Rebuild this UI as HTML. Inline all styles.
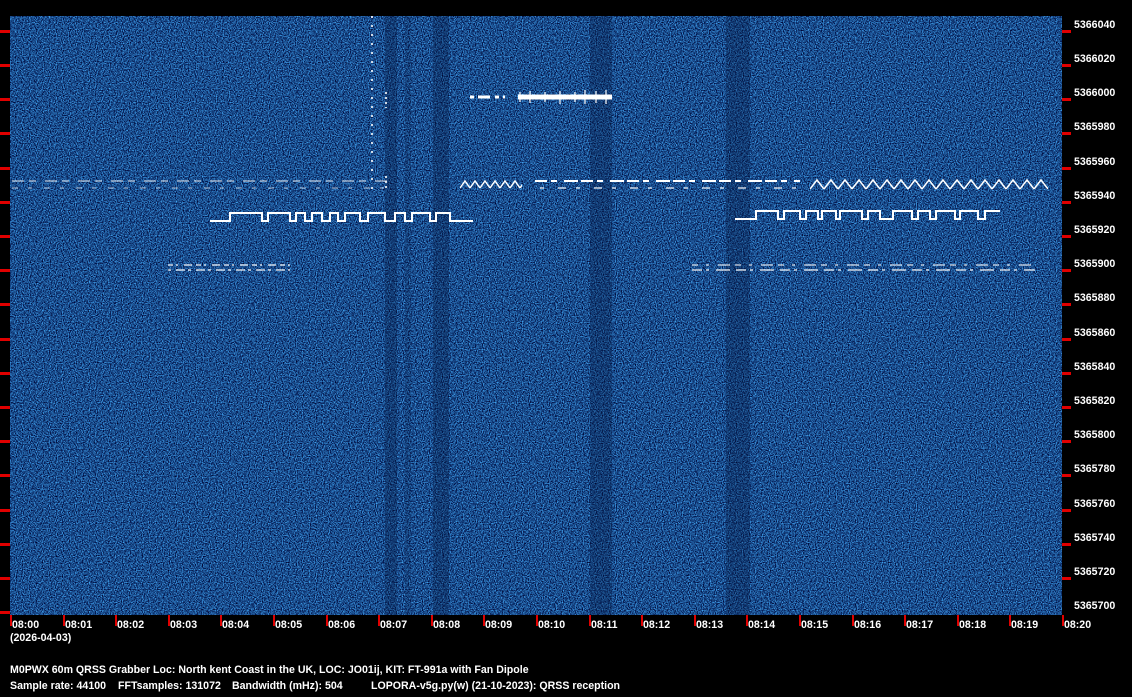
<!DOCTYPE html>
<html><head><meta charset="utf-8"><style>
html,body{margin:0;padding:0;background:#000;width:1132px;height:697px;overflow:hidden}
body{position:relative;font-family:"Liberation Sans",sans-serif;font-weight:bold;font-size:10.6px;color:#fff}
.t{position:absolute;white-space:pre;line-height:12px}
</style></head><body>
<svg width="1132" height="697" style="position:absolute;left:0;top:0">
<defs>
<filter id="nz" x="0" y="0" width="100%" height="100%" color-interpolation-filters="sRGB">
<feTurbulence type="fractalNoise" baseFrequency="0.85" numOctaves="2" seed="3"/>
<feColorMatrix type="matrix" values="0.6 0 0 0 -0.2  1.3 0 0 0 -0.35  1.5 0 0 0 -0.2  0 0 0 0 1"/>
</filter>
<pattern id="zz" x="810" y="0" width="14" height="697" patternUnits="userSpaceOnUse">
<path d="M0 189 L7 180 L14 189" stroke="#fff" stroke-width="1.5" fill="none"/>
</pattern>
<pattern id="zz2" x="460" y="0" width="10" height="697" patternUnits="userSpaceOnUse">
<path d="M0 188 L5 181 L10 188" stroke="#fff" stroke-width="1.5" fill="none"/>
</pattern>
</defs>
<rect x="10" y="16" width="1052" height="599" fill="#1b4a88"/>
<rect x="10" y="16" width="1052" height="599" filter="url(#nz)"/>
<g fill="#061d48" opacity="0.35">
<rect x="385" y="16" width="12" height="599"/>
<rect x="405" y="16" width="6" height="599" opacity="0.6"/>
<rect x="433" y="16" width="16" height="599"/>
<rect x="590" y="16" width="22" height="599"/>
<rect x="726" y="16" width="22" height="599"/>
<rect x="744" y="16" width="6" height="599"/>
</g>
<g stroke="#fff" fill="none">
<path d="M12 181 H390" stroke-width="1.5" stroke-dasharray="12 5 7 9" opacity="0.6"/>
<path d="M12 188 H390" stroke-width="1.5" stroke-dasharray="6 10 4 12" opacity="0.45"/>
<rect x="460" y="178" width="62" height="14" fill="url(#zz2)" stroke="none"/>
<path d="M535 181 H800" stroke-width="2" stroke-dasharray="12 4 6 7 14 3"/>
<path d="M540 188 H800" stroke-width="1.5" stroke-dasharray="4 14 8 10" opacity="0.8"/>
<rect x="810" y="176" width="238" height="16" fill="url(#zz)" stroke="none"/>
<path d="M210 221 H230 V213 H262 V221 H268 V213 H290 V221 H296 V213 H305 V221 H312 V213 H322 V221 H330 V213 H338 V221 H345 V213 H360 V221 H368 V213 H385 V221 H395 V213 H405 V221 H412 V213 H430 V221 H436 V213 H450 V221 H473" stroke-width="2"/>
<path d="M735 219 H756 V211 H778 V219 H784 V211 H800 V219 H806 V211 H818 V219 H822 V211 H836 V219 H840 V211 H862 V219 H868 V211 H880 V219 H893 V211 H912 V219 H918 V211 H930 V219 H936 V211 H955 V219 H960 V211 H978 V219 H985 V211 H1000" stroke-width="2"/>
<path d="M168 265 H290" stroke-width="1.5" stroke-dasharray="5 3 2 6 8 4" opacity="0.8"/>
<path d="M168 270 H290" stroke-width="1.5" stroke-dasharray="3 5 9 3" opacity="0.8"/>
<path d="M692 265 H1035" stroke-width="1.5" stroke-dasharray="6 8 3 9 12 5" opacity="0.7"/>
<path d="M692 270 H1035" stroke-width="1.5" stroke-dasharray="10 4 3 7 14 6" opacity="0.8"/>
<path d="M470 97 H505" stroke-width="3" stroke-dasharray="4 4 12 5"/>
<path d="M518 97 H612" stroke-width="5"/>
<path d="M520 92 V102 M530 91 V103 M545 92 V102 M560 91 V104 M575 92 V102 M585 90 V104 M596 91 V103 M606 90 V104" stroke-width="1.5" opacity="0.8"/>
<path d="M372 16 V190" stroke-width="2" stroke-dasharray="2 7" opacity="0.8"/>
<path d="M386 92 V108 M386 176 V190" stroke-width="2" stroke-dasharray="2 3" opacity="0.8"/>
</g>
<g fill="#e00000">
<rect x="0" y="30" width="10" height="3"/><rect x="0" y="64" width="10" height="3"/><rect x="0" y="98" width="10" height="3"/><rect x="0" y="132" width="10" height="3"/><rect x="0" y="167" width="10" height="3"/><rect x="0" y="201" width="10" height="3"/><rect x="0" y="235" width="10" height="3"/><rect x="0" y="269" width="10" height="3"/><rect x="0" y="303" width="10" height="3"/><rect x="0" y="338" width="10" height="3"/><rect x="0" y="372" width="10" height="3"/><rect x="0" y="406" width="10" height="3"/><rect x="0" y="440" width="10" height="3"/><rect x="0" y="474" width="10" height="3"/><rect x="0" y="509" width="10" height="3"/><rect x="0" y="543" width="10" height="3"/><rect x="0" y="577" width="10" height="3"/><rect x="0" y="611" width="10" height="3"/>
<rect x="1062" y="30" width="9" height="3"/><rect x="1062" y="64" width="9" height="3"/><rect x="1062" y="98" width="9" height="3"/><rect x="1062" y="132" width="9" height="3"/><rect x="1062" y="167" width="9" height="3"/><rect x="1062" y="201" width="9" height="3"/><rect x="1062" y="235" width="9" height="3"/><rect x="1062" y="269" width="9" height="3"/><rect x="1062" y="303" width="9" height="3"/><rect x="1062" y="338" width="9" height="3"/><rect x="1062" y="372" width="9" height="3"/><rect x="1062" y="406" width="9" height="3"/><rect x="1062" y="440" width="9" height="3"/><rect x="1062" y="474" width="9" height="3"/><rect x="1062" y="509" width="9" height="3"/><rect x="1062" y="543" width="9" height="3"/><rect x="1062" y="577" width="9" height="3"/>
<rect x="10" y="615" width="2" height="11"/><rect x="63" y="615" width="2" height="11"/><rect x="115" y="615" width="2" height="11"/><rect x="168" y="615" width="2" height="11"/><rect x="220" y="615" width="2" height="11"/><rect x="273" y="615" width="2" height="11"/><rect x="326" y="615" width="2" height="11"/><rect x="378" y="615" width="2" height="11"/><rect x="431" y="615" width="2" height="11"/><rect x="483" y="615" width="2" height="11"/><rect x="536" y="615" width="2" height="11"/><rect x="589" y="615" width="2" height="11"/><rect x="641" y="615" width="2" height="11"/><rect x="694" y="615" width="2" height="11"/><rect x="746" y="615" width="2" height="11"/><rect x="799" y="615" width="2" height="11"/><rect x="852" y="615" width="2" height="11"/><rect x="904" y="615" width="2" height="11"/><rect x="957" y="615" width="2" height="11"/><rect x="1009" y="615" width="2" height="11"/><rect x="1062" y="615" width="2" height="11"/>
</g>
</svg>
<div class="t" style="left:1074px;top:19px">5366040</div>
<div class="t" style="left:1074px;top:53px">5366020</div>
<div class="t" style="left:1074px;top:87px">5366000</div>
<div class="t" style="left:1074px;top:121px">5365980</div>
<div class="t" style="left:1074px;top:156px">5365960</div>
<div class="t" style="left:1074px;top:190px">5365940</div>
<div class="t" style="left:1074px;top:224px">5365920</div>
<div class="t" style="left:1074px;top:258px">5365900</div>
<div class="t" style="left:1074px;top:292px">5365880</div>
<div class="t" style="left:1074px;top:327px">5365860</div>
<div class="t" style="left:1074px;top:361px">5365840</div>
<div class="t" style="left:1074px;top:395px">5365820</div>
<div class="t" style="left:1074px;top:429px">5365800</div>
<div class="t" style="left:1074px;top:463px">5365780</div>
<div class="t" style="left:1074px;top:498px">5365760</div>
<div class="t" style="left:1074px;top:532px">5365740</div>
<div class="t" style="left:1074px;top:566px">5365720</div>
<div class="t" style="left:1074px;top:600px">5365700</div>
<div class="t" style="left:12px;top:619px">08:00</div>
<div class="t" style="left:65px;top:619px">08:01</div>
<div class="t" style="left:117px;top:619px">08:02</div>
<div class="t" style="left:170px;top:619px">08:03</div>
<div class="t" style="left:222px;top:619px">08:04</div>
<div class="t" style="left:275px;top:619px">08:05</div>
<div class="t" style="left:328px;top:619px">08:06</div>
<div class="t" style="left:380px;top:619px">08:07</div>
<div class="t" style="left:433px;top:619px">08:08</div>
<div class="t" style="left:485px;top:619px">08:09</div>
<div class="t" style="left:538px;top:619px">08:10</div>
<div class="t" style="left:591px;top:619px">08:11</div>
<div class="t" style="left:643px;top:619px">08:12</div>
<div class="t" style="left:696px;top:619px">08:13</div>
<div class="t" style="left:748px;top:619px">08:14</div>
<div class="t" style="left:801px;top:619px">08:15</div>
<div class="t" style="left:854px;top:619px">08:16</div>
<div class="t" style="left:906px;top:619px">08:17</div>
<div class="t" style="left:959px;top:619px">08:18</div>
<div class="t" style="left:1011px;top:619px">08:19</div>
<div class="t" style="left:1064px;top:619px">08:20</div>
<div class="t" style="left:10px;top:632px">(2026-04-03)</div>
<div class="t" style="left:10px;top:664px">M0PWX 60m QRSS Grabber Loc: North kent Coast in the UK, LOC: JO01ij, KIT: FT-991a with Fan Dipole</div>
<div class="t" style="left:10px;top:680px">Sample rate: 44100</div>
<div class="t" style="left:118px;top:680px">FFTsamples: 131072</div>
<div class="t" style="left:232px;top:680px">Bandwidth (mHz): 504</div>
<div class="t" style="left:371px;top:680px">LOPORA-v5g.py(w) (21-10-2023): QRSS reception</div>
</body></html>
